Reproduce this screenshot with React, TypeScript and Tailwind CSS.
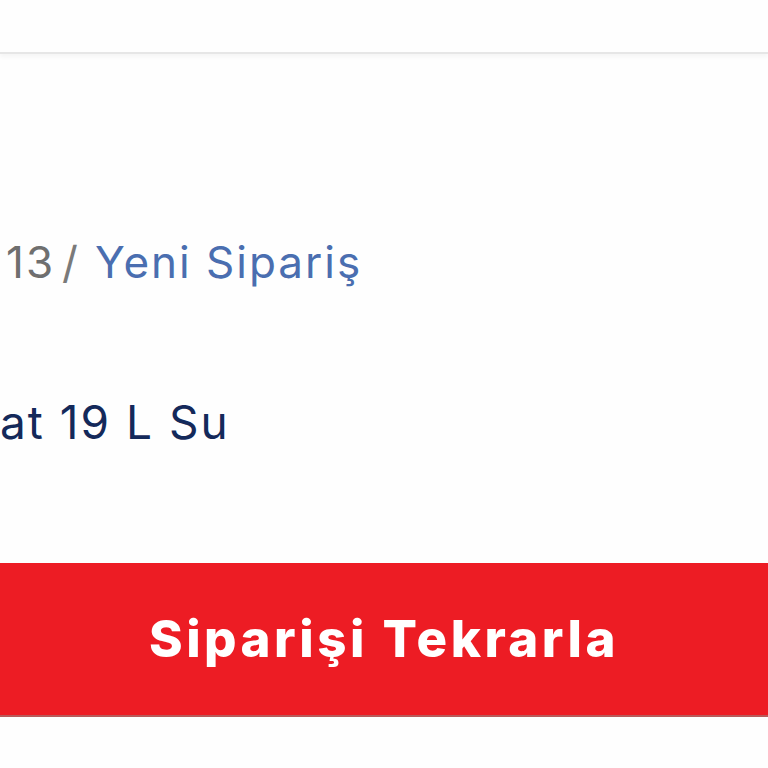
export default function App() {
  return (
    <div className="w-[768px] h-[768px] overflow-hidden bg-[#fefefe] font-['Inter','Liberation_Sans',sans-serif]">
      {/* top bar */}
      <div className="h-[54px] bg-[#fefefe] border-b-2 border-[#e6e6e6] shadow-[0_3px_4px_rgba(0,0,0,0.04)]" />

      <div className="pt-[180px] whitespace-nowrap">
        <div className="pl-[6px] flex items-baseline text-[44px] leading-[56px] tracking-[2px]">
          <span className="text-[#6f6f6f]">13</span>
          <span className="text-[#7a7a7a] ml-[7px] mr-[15px]">/</span>
          <span className="text-[#4a6eb0]">Yeni Sipariş</span>
        </div>

        <div className="mt-[104px] text-[46px] leading-[56px] tracking-[2px] text-[#14295a]">
          at 19 L Su
        </div>
      </div>

      <button className="mt-[113px] w-full h-[154px] bg-[#ed1c24] border-b-2 border-[#b85a5a] flex items-center justify-center text-white text-[51px] font-extrabold tracking-[3.5px]">
        Siparişi Tekrarla
      </button>
    </div>
  );
}
